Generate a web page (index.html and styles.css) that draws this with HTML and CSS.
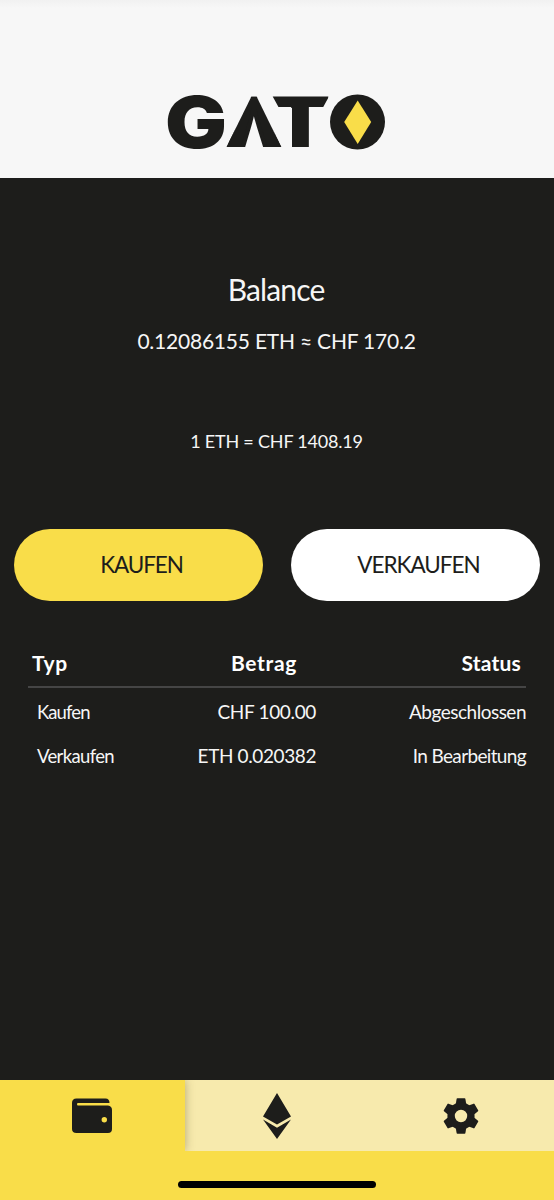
FILE: index.html
```html
<!DOCTYPE html>
<html lang="de">
<head>
<meta charset="utf-8">
<title>GATO</title>
<link rel="stylesheet" href="styles.css">
</head>
<body>
<div class="app">
  <header class="header">
    <svg class="logo" width="218" height="56" viewBox="0 0 218 56" role="img" aria-label="GATO">
      <defs>
        <clipPath id="peak"><path d="M58.500 52L83.300 1.700H88.700L113.300 52Z"/></clipPath>
        <clipPath id="slant"><path d="M104.700 1.500H161L154.700 13H142V54H124V13H111Z"/></clipPath>
      </defs>
      <text class="logo-letter" transform="translate(-3 53) scale(1.150 1)" font-size="71.500">G</text>
      <g clip-path="url(#peak)"><text class="logo-letter peak" transform="translate(57.200 52) scale(1.050 1)" font-size="69.500">Λ</text></g>
      <g clip-path="url(#slant)"><text class="logo-letter" transform="translate(101.200 52) scale(1.290 1)" font-size="69.500">T</text></g>
      <circle cx="189.500" cy="27" r="27.500" fill="#1d1d1b"/>
      <path d="M189.700 5.500L203.200 27L189.700 49L176.200 27Z" fill="#f9dd49"/>
    </svg>
  </header>
  <main class="main">
    <h1 class="title"><span>Balance</span></h1>
    <p class="balance"><span>0.12086155 ETH ≈ CHF 170.2</span></p>
    <p class="rate"><span>1 ETH = CHF 1408.19</span></p>
    <div class="actions">
      <button class="button buy"><span>KAUFEN</span></button>
      <button class="button sell"><span>VERKAUFEN</span></button>
    </div>
    <section class="history">
      <div class="row head"><span class="h-type">Typ</span><span class="h-amount">Betrag</span><span class="h-status">Status</span></div>
      <div class="row"><span class="type-buy">Kaufen</span><span class="amount chf">CHF 100.00</span><span class="status done">Abgeschlossen</span></div>
      <div class="row"><span class="type-sell">Verkaufen</span><span class="amount eth">ETH 0.020382</span><span class="status pending">In Bearbeitung</span></div>
    </section>
  </main>
  <nav class="nav">
    <div class="tabs">
      <a class="tab active"><svg width="42" height="36" viewBox="0 0 42 36"><path fill="#1d1d1b" fill-rule="evenodd" d="M5.500 .5H34.500Q38.500 .5 38.500 5H7Q6 5 6 6.200Q6 7.500 7 7.500H37Q41 8 41 12V31Q41 35 37 35H5.500Q1 35 1 31V5Q1 .5 5.500 .5ZM33.300 19A2.700 2.700 0 1 0 33.300 24.400A2.700 2.700 0 1 0 33.300 19Z"/></svg></a>
      <a class="tab"><svg width="28" height="46" viewBox="0 0 28 46"><path fill="#1d1d1b" d="M14 0L28 23.500L14 31.500L0 23.500ZM0 26.500L14 34.700L28 26.500L14 46Z"/></svg></a>
      <a class="tab"><svg width="36" height="36" viewBox="-18 -18 36 36">
        <defs><path id="tooth" d="M-5.400 -11L-4.400 -17.100Q-4.300 -17.700 -3.700 -17.700H3.700Q4.300 -17.700 4.400 -17.100L5.400 -11Z"/></defs>
        <g fill="#1d1d1b"><use href="#tooth"/><use href="#tooth" transform="rotate(60)"/><use href="#tooth" transform="rotate(120)"/><use href="#tooth" transform="rotate(180)"/><use href="#tooth" transform="rotate(240)"/><use href="#tooth" transform="rotate(300)"/></g>
        <circle r="9.900" fill="none" stroke="#1d1d1b" stroke-width="7.400"/>
      </svg></a>
    </div>
    <div class="home-indicator"></div>
  </nav>
</div>
</body>
</html>
```
FILE: styles.css
```css
* { box-sizing: border-box; }
body { margin: 0; font-family: Lato, sans-serif; color: #f6f6f6; background: #1d1d1b; }
h1, p { margin: 0; font-weight: 400; text-align: center; }
.app { width: 554px; height: 1200px; display: flex; flex-direction: column; overflow: hidden; }
.header { height: 178px; padding-top: 95px; background: linear-gradient(#f1f1f1, #f7f7f7 8px); flex: none; }
.logo { display: block; margin-left: 168px; overflow: visible; }
.logo-letter { font-family: Inter, sans-serif; font-weight: 900; fill: #1d1d1b; }
.peak { stroke: #1d1d1b; stroke-width: 4px; }
.main { flex: 1; padding-top: 91px; }
.title { font-size: 30px; line-height: 40px; letter-spacing: -.85px; padding-right: 2px; }
.balance { font-size: 21px; line-height: 30px; margin-top: 17px; letter-spacing: -.22px; padding-right: 1px; }
.rate { font-size: 18px; line-height: 26px; margin-top: 72px; letter-spacing: -.2px; padding-right: 1px; }
.actions { display: flex; gap: 28px; padding: 0 14px; margin-top: 75px; }
.button { flex: 1; height: 72px; border: 0; border-radius: 36px; padding: 0 0 1px; font-family: inherit; font-size: 22.5px; color: #1d1d1b; }
.buy { background: #f9dd49; padding-left: 6px; letter-spacing: -1.1px; }
.sell { background: #fff; padding-left: 6px; letter-spacing: -1px; }
.history { margin: 42px 28px 0; }
.row { display: grid; grid-template-columns: 140px 140px 1fr; height: 44px; align-items: baseline; line-height: 44px; font-size: 19px; padding-left: 9px; }
.head { height: 45px; line-height: 39px; font-size: 21px; font-weight: 700; color: #fff; border-bottom: 2px solid #454545; padding: 0 0 4px 4px; margin-bottom: 2px; }
.h-type { letter-spacing: .7px; }
.h-amount { padding-left: 59px; letter-spacing: .65px; }
.h-status { text-align: right; padding-right: 5px; letter-spacing: .2px; }
.type-buy { font-size: 18.5px; letter-spacing: -.9px; }
.type-sell { font-size: 18.5px; letter-spacing: -.65px; }
.amount, .status { text-align: right; }
.amount { padding-right: 1px; }
.chf { letter-spacing: -.35px; }
.eth { letter-spacing: -.4px; }
.done { letter-spacing: -.5px; }
.pending { letter-spacing: -.65px; }
.nav { height: 120px; background: #f9dd49; flex: none; }
.tabs { display: grid; grid-template-columns: 185px 184px 185px; height: 71px; background: #f7eaad; overflow: hidden; }
.tab { display: flex; align-items: center; justify-content: center; padding-right: 1px; }
.active { background: #f9dd49; box-shadow: 0 0 9px rgba(80, 70, 30, .4); }
.home-indicator { width: 198px; height: 7px; margin: 30px auto 0; border-radius: 4px; background: #000; }
```
